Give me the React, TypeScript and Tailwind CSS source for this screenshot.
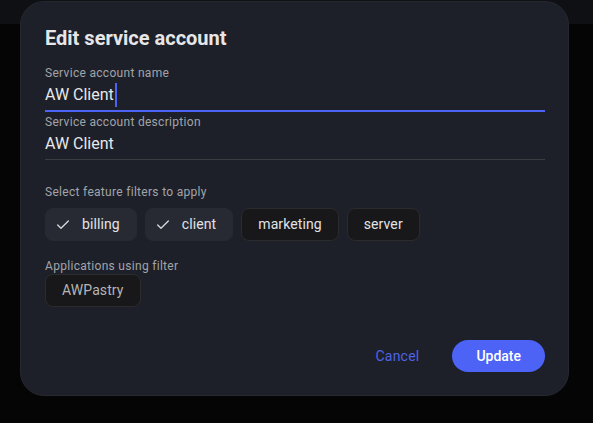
import React from 'react';
import { Check } from 'lucide-react';

const filters = [
  { name: 'billing', selected: true },
  { name: 'client', selected: true },
  { name: 'marketing', selected: false },
  { name: 'server', selected: false },
];

const FilterChip: React.FC<{ name: string; selected: boolean }> = ({ name, selected }) =>
  selected ? (
    <div className="flex h-[33px] items-center gap-[11px] rounded-lg border border-[#272a33] bg-[#272a33] pl-[9px] pr-4 text-[14px] tracking-[0.1px] text-[#e2e3e6]">
      <Check size={16} strokeWidth={2} className="text-[#d6d7da]" />
      {name}
    </div>
  ) : (
    <div className="flex h-[33px] items-center rounded-lg border border-[#2b2b2d] bg-[#18181a] px-4 text-[14px] tracking-[0.1px] text-[#e2e3e6]">
      {name}
    </div>
  );

export default function App() {
  return (
    <div
      className="relative h-[423px] w-[593px] overflow-hidden bg-[#050505]"
      style={{ fontFamily: 'Roboto, "Noto Sans", sans-serif' }}
    >
      <div className="h-[24px] w-full bg-[#0f1013]" />

      {/* modal */}
      <div className="absolute left-[20px] top-[1px] flex h-[395px] w-[549px] flex-col rounded-[24px] border border-[#252831] bg-[#1d2029] pl-[24px] pr-[23px] pt-[22px]">
        <h2 className="text-[20px] font-bold leading-[28px] text-[#e6e6e8]">Edit service account</h2>

        <div className="mt-[13px] flex flex-col">
          <label className="text-[12px] leading-4 tracking-[0.3px] text-[#a2a4a9]">Service account name</label>
          <div className="border-b-2 border-[#4c63f5] pb-[3px] pt-[2px] text-[16px] leading-6 text-[#e8e8ea]">
            AW Client<span className="ml-[1px] inline-block h-[24px] w-[2px] bg-[#4c63f5] align-top" />
          </div>
        </div>

        <div className="mt-[2px] flex flex-col">
          <label className="text-[12px] leading-4 tracking-[0.3px] text-[#a2a4a9]">Service account description</label>
          <div className="border-b border-[#3a3c42] pb-[3px] pt-[2px] text-[16px] leading-6 text-[#e8e8ea]">AW Client</div>
        </div>

        <div className="mt-[24px] text-[12px] leading-4 tracking-[0.3px] text-[#a2a4a9]">Select feature filters to apply</div>
        <div className="mt-[8px] flex gap-2">
          {filters.map(f => (
            <FilterChip key={f.name} name={f.name} selected={f.selected} />
          ))}
        </div>

        <div className="mt-[17px] text-[12px] leading-4 tracking-[0.3px] text-[#a2a4a9]">Applications using filter</div>
        <div className="flex">
          <div className="flex h-[33px] items-center rounded-lg border border-[#2b2b2d] bg-[#18181a] px-4 text-[14px] tracking-[0.1px] text-[#b4b5b8]">
            AWPastry
          </div>
        </div>

        <div className="mt-auto mb-[23px] flex items-center justify-end gap-[33px]">
          <button className="text-[14px] tracking-[0.2px] text-[#4f63e3]">Cancel</button>
          <button className="h-[32px] rounded-full bg-[#4c63f5] px-6 text-[14px] font-medium text-white">Update</button>
        </div>
      </div>
    </div>
  );
}
